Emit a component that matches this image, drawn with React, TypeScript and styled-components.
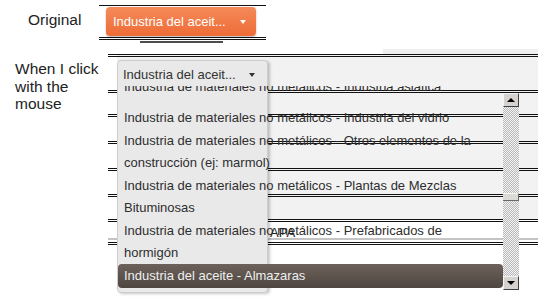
import React from "react";
import styled, { createGlobalStyle } from "styled-components";

const Global = createGlobalStyle`
  html, body { margin: 0; padding: 0; background: #fff; }
  body { font-family: "Liberation Sans", Arial, sans-serif; }
  #root { width: 547px; height: 299px; }
`;

const Page = styled.div`
  width: 547px;
  height: 299px;
  overflow: hidden;
  display: flex;
  flex-direction: column;
`;

const Section = styled.div<{ $h?: number }>`
  display: flex;
  flex: ${(p) => (p.$h ? "none" : "1")};
  height: ${(p) => (p.$h ? `${p.$h}px` : "auto")};
`;

const Label = styled.div<{ $w: number; $pl: number }>`
  flex: none;
  box-sizing: border-box;
  width: ${(p) => p.$w}px;
  padding: 11px 0 0 ${(p) => p.$pl}px;
  font-size: 15.5px;
  line-height: 17.5px;
  color: #222;
`;

const FrameCol = styled.div`
  display: flex;
  flex-direction: column;
  margin-top: 5px;
`;

const Frame = styled.div`
  box-sizing: border-box;
  width: 167px;
  height: 35px;
  padding: 1px 0 0 7px;
  border-top: 1px solid #111;
  border-bottom: 3px double #111;
`;

const OrangeSelect = styled.div`
  box-sizing: border-box;
  width: 150px;
  height: 29px;
  border-radius: 4px;
  background: linear-gradient(#f48a59, #ee6c37);
  box-shadow: 0 1px 2px rgba(0, 0, 0, 0.3);
  display: flex;
  align-items: center;
  justify-content: space-between;
  padding: 0 10px 0 7px;
  color: #fff;
  font-size: 13px;
`;

const Caret = styled.span<{ $c: string }>`
  width: 0;
  height: 0;
  border-left: 3.5px solid transparent;
  border-right: 3.5px solid transparent;
  border-top: 4px solid ${(p) => p.$c};
`;

const ShadowBar = styled.div`
  margin: 1px 0 0 41px;
  width: 83px;
  height: 2px;
  background: #4d4d4d;
`;

const Stage = styled.div`
  position: relative;
  flex: none;
  width: 430px;
  display: flex;
  flex-direction: column;
`;

const TopStrip = styled.div`
  height: 5px;
  box-sizing: border-box;
  background: linear-gradient(to right, transparent 275px, #efefef 275px);
  border-bottom: 1px solid transparent;
`;

const Row = styled.div<{ $h: number; $white?: boolean }>`
  box-sizing: content-box;
  height: ${(p) => p.$h}px;
  border-top: 3px double #111;
  background: ${(p) =>
    p.$white
      ? "linear-gradient(to bottom, #fff 0, #fff 16px, #c4c4c4 16px, #c4c4c4 18px, #fff 18px)"
      : "linear-gradient(to right, #fff 9px, #f2f2f2 9px)"};
`;

const RowEnd = styled.div`
  height: 0;
  border-top: 3px double #111;
`;

const Panel = styled.div`
  position: absolute;
  left: 9px;
  top: 11px;
  width: 151px;
  height: 233px;
  box-sizing: border-box;
  background: #e9e9e9;
  border: 1px solid #cdcdcd;
  border-radius: 4px;
  box-shadow: 2px 1px 3px rgba(0, 0, 0, 0.22);
`;

const PanelHeader = styled.div`
  height: 27px;
  display: flex;
  align-items: center;
  justify-content: space-between;
  padding: 0 12px 0 5px;
  font-size: 13px;
  color: #333;
`;

const List = styled.div`
  position: absolute;
  left: 10px;
  top: 37px;
  width: 385px;
  height: 204px;
  overflow: hidden;
`;

const ListInner = styled.div`
  margin-top: -11px;
  display: flex;
  flex-direction: column;
`;

const Option = styled.div<{ $active?: boolean; $gap?: number }>`
  padding: 1px 19px 1px 6px;
  margin-bottom: ${(p) => p.$gap ?? 0}px;
  font-size: 13px;
  line-height: 21.5px;
  color: ${(p) => (p.$active ? "#efefef" : "#2e2e2e")};
  border-radius: 4px;
  background: ${(p) =>
    p.$active ? "linear-gradient(#6d625b, #4f4641)" : "transparent"};
`;

const ScrollBar = styled.div`
  position: absolute;
  left: 395px;
  top: 44px;
  width: 16px;
  height: 197px;
  display: flex;
  flex-direction: column;
  background: repeating-conic-gradient(#b9b9b9 0 25%, #f3f3f3 0 50%) 0 0 / 2px 2px;
`;

const ScrollButton = styled.div`
  flex: none;
  box-sizing: border-box;
  height: 14px;
  background: #d6d3ce;
  border-top: 1px solid #f4f4f4;
  border-left: 1px solid #f4f4f4;
  border-right: 1px solid #404040;
  border-bottom: 1px solid #404040;
  display: flex;
  align-items: center;
  justify-content: center;
`;

const Arrow = styled.span<{ $up?: boolean }>`
  width: 0;
  height: 0;
  border-left: 4px solid transparent;
  border-right: 4px solid transparent;
  ${(p) => (p.$up ? "border-bottom: 4px solid #000;" : "border-top: 4px solid #000;")}
`;

const TrackGap = styled.div<{ $h?: number }>`
  flex: ${(p) => (p.$h ? "none" : "1")};
  height: ${(p) => (p.$h ? `${p.$h}px` : "auto")};
`;

const Thumb = styled.div`
  flex: none;
  box-sizing: border-box;
  height: 8px;
  background: #dcdad6;
  border-top: 1px solid #f6f6f6;
  border-right: 1px solid #6a6a6a;
  border-bottom: 1px solid #6a6a6a;
`;

const Ghost = styled.span`
  position: absolute;
  left: 162px;
  top: 177px;
  font-size: 13px;
  line-height: 14px;
  color: #222;
`;

const rows = [
  { h: 33 },
  { h: 21 },
  { h: 24 },
  { h: 24 },
  { h: 23 },
  { h: 22 },
  { h: 20, white: true },
];

const options = [
  { t: "Industria de materiales no metálicos - Industria asiatica", gap: 7 },
  { t: "Industria de materiales no metálicos - Industria del vidrio" },
  { t: "Industria de materiales no metálicos - Otros elementos de la construcción (ej: marmol)" },
  { t: "Industria de materiales no metálicos - Plantas de Mezclas Bituminosas" },
  { t: "Industria de materiales no metálicos - Prefabricados de hormigón" },
  { t: "Industria del aceite - Almazaras", active: true },
];

export default function App() {
  return (
    <>
      <Global />
      <Page>
        <Section $h={49}>
          <Label $w={99} $pl={28}>Original</Label>
          <FrameCol>
            <Frame>
              <OrangeSelect>
                <span>Industria del aceit...</span>
                <Caret $c="#fff" />
              </OrangeSelect>
            </Frame>
            <ShadowBar />
          </FrameCol>
        </Section>
        <Section>
          <Label $w={108} $pl={15}>
            When I click
            <br />
            with the
            <br />
            mouse
          </Label>
          <Stage>
            <TopStrip />
            {rows.map((r, i) => (
              <Row key={i} $h={r.h} $white={r.white} />
            ))}
            <RowEnd />
            <Ghost>APA</Ghost>
            <Panel>
              <PanelHeader>
                <span>Industria del aceit...</span>
                <Caret $c="#333" />
              </PanelHeader>
            </Panel>
            <List>
              <ListInner>
                {options.map((o, i) => (
                  <Option key={i} $active={o.active} $gap={o.gap}>
                    {o.t}
                  </Option>
                ))}
              </ListInner>
            </List>
            <ScrollBar>
              <ScrollButton>
                <Arrow $up />
              </ScrollButton>
              <TrackGap $h={86} />
              <Thumb />
              <TrackGap />
              <ScrollButton>
                <Arrow />
              </ScrollButton>
            </ScrollBar>
          </Stage>
        </Section>
      </Page>
    </>
  );
}
